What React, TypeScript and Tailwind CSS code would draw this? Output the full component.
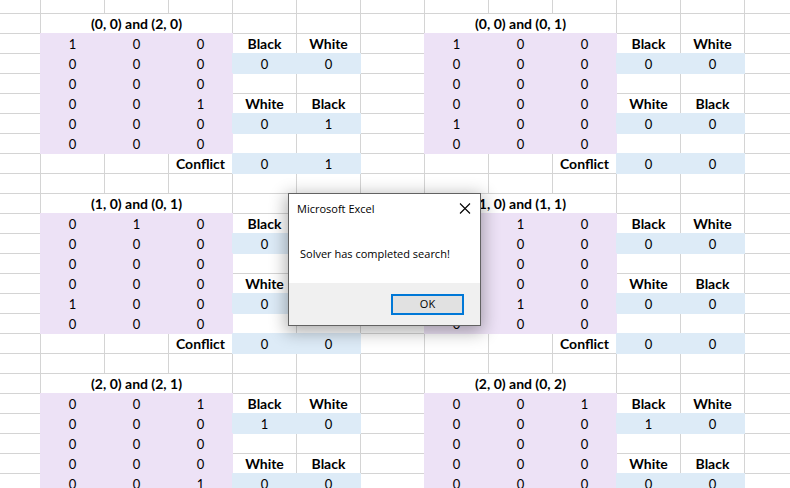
import React from "react";

type Block = {
  title: string;
  matrix: string[];
  first: [number, number];
  second: [number, number];
  conflict: [number, number];
};

const blocks: [Block, Block][] = [
  [
    { title: "(0, 0) and (2, 0)", matrix: ["100", "000", "000", "001", "000", "000"], first: [0, 0], second: [0, 1], conflict: [0, 1] },
    { title: "(0, 0) and (0, 1)", matrix: ["100", "000", "000", "000", "100", "000"], first: [0, 0], second: [0, 0], conflict: [0, 0] },
  ],
  [
    { title: "(1, 0) and (0, 1)", matrix: ["010", "000", "000", "000", "100", "000"], first: [0, 0], second: [0, 0], conflict: [0, 0] },
    { title: "(1, 0) and (1, 1)", matrix: ["010", "000", "000", "000", "010", "000"], first: [0, 0], second: [0, 0], conflict: [0, 0] },
  ],
  [
    { title: "(2, 0) and (2, 1)", matrix: ["001", "000", "000", "000", "001", "000"], first: [1, 0], second: [0, 0], conflict: [0, 0] },
    { title: "(2, 0) and (0, 2)", matrix: ["001", "000", "000", "000", "000", "000"], first: [1, 0], second: [0, 0], conflict: [0, 0] },
  ],
];

const cell = "h-5 border-r border-b text-center align-middle whitespace-nowrap ";
const base = cell + "p-0 pt-0.5 text-[13px] leading-[17px] ";
const plain = base + "border-[#d4d4d4]";
const bold = cell + "border-[#d4d4d4] px-0 py-px text-sm/[17px] font-bold";
// Filled cells also cover the gridlines above and to the left of them.
const purple =
  base + "border-[#ede2f6] bg-[#ede2f6] shadow-[-1px_0_0_#ede2f6,0_-1px_0_#ede2f6,-1px_-1px_0_#ede2f6]";
const blue =
  base + "border-[#ddebf7] bg-[#ddebf7] shadow-[-1px_0_0_#ddebf7,0_-1px_0_#ddebf7,-1px_-1px_0_#ddebf7]";

function Pair({ values, style }: { values: [React.ReactNode, React.ReactNode]; style: string }) {
  return (
    <>
      <td className={style}>{values[0]}</td>
      <td className={style}>{values[1]}</td>
    </>
  );
}

function MatrixCells({ block, row }: { block: Block; row: number }) {
  return (
    <>
      {block.matrix[row].split("").map((v, i) => (
        <td key={i} className={purple}>{v}</td>
      ))}
      {row === 0 && <Pair values={["Black", "White"]} style={bold} />}
      {row === 1 && <Pair values={block.first} style={blue} />}
      {row === 3 && <Pair values={["White", "Black"]} style={bold} />}
      {row === 4 && <Pair values={block.second} style={blue} />}
      {(row === 2 || row === 5) && <Pair values={["", ""]} style={plain} />}
    </>
  );
}

function TitleCells({ block }: { block: Block }) {
  return (
    <>
      <th colSpan={3} className={bold}>{block.title}</th>
      <Pair values={["", ""]} style={plain} />
    </>
  );
}

function ConflictCells({ block }: { block: Block }) {
  return (
    <>
      <td className={plain} />
      <td className={plain} />
      <th className={bold}>Conflict</th>
      <Pair values={block.conflict} style={blue} />
    </>
  );
}

function SheetRow({ left, right }: { left: React.ReactNode; right: React.ReactNode }) {
  return (
    <tr>
      <td className={plain} />
      {left}
      <td className={plain} />
      {right}
      <td className="border-b border-[#d4d4d4] p-0" />
    </tr>
  );
}

function EmptyRow({ short = false }: { short?: boolean }) {
  return (
    <tr>
      {Array.from({ length: 12 }, (_, i) => (
        <td key={i} className={short ? "h-[14px] border-r border-b border-[#d4d4d4] p-0" : plain} />
      ))}
      <td className="border-b border-[#d4d4d4] p-0" />
    </tr>
  );
}

function Sheet() {
  return (
    <table className="w-full table-fixed border-separate border-spacing-0 font-['Lato',sans-serif] text-black">
      <colgroup>
        <col className="w-[41px]" />
        {Array.from({ length: 11 }, (_, i) => (
          <col key={i} className="w-16" />
        ))}
        <col />
      </colgroup>
      <tbody>
        <EmptyRow short />
        {blocks.map(([l, r]) => (
          <React.Fragment key={l.title}>
            <SheetRow left={<TitleCells block={l} />} right={<TitleCells block={r} />} />
            {l.matrix.map((_, i) => (
              <SheetRow key={i} left={<MatrixCells block={l} row={i} />} right={<MatrixCells block={r} row={i} />} />
            ))}
            <SheetRow left={<ConflictCells block={l} />} right={<ConflictCells block={r} />} />
            <EmptyRow />
          </React.Fragment>
        ))}
      </tbody>
    </table>
  );
}

function MessageBox() {
  return (
    <div
      role="alertdialog"
      aria-labelledby="box-title"
      aria-describedby="box-text"
      className="absolute top-[193px] left-[288px] flex w-[193px] flex-col border border-[#626262] bg-white font-['Open_Sans',sans-serif] text-black shadow-[0_4px_16px_2px_rgba(0,0,0,0.32)]"
    >
      <div className="flex h-[30px] items-center justify-between px-2">
        <h1 id="box-title" className="text-[11px] leading-4">Microsoft Excel</h1>
        <button type="button" aria-label="Close" className="flex h-4 w-3.5 items-center justify-center">
          <svg viewBox="0 0 12 12" className="size-3" fill="none" stroke="#000" strokeWidth="1.1">
            <path d="M1 .5l10 10M11 .5l-10 10" />
          </svg>
        </button>
      </div>
      <p id="box-text" className="h-[59px] px-[11px] pt-[22px] text-[11px] leading-4 whitespace-nowrap">
        Solver has completed search!
      </p>
      <div className="flex h-[42px] items-center justify-end bg-[#f0f0f0] pr-4">
        <button type="button" className="h-[21px] w-[73px] border-2 border-[#0078d7] bg-[#e1e1e1] text-[11px] leading-4">
          OK
        </button>
      </div>
    </div>
  );
}

export default function App() {
  return (
    <main className="relative h-screen overflow-hidden bg-white">
      <Sheet />
      <MessageBox />
    </main>
  );
}
